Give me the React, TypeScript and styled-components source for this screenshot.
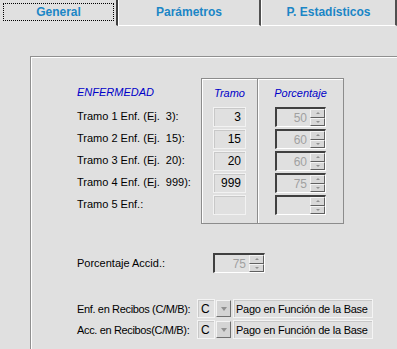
import React from 'react';
import styled, { createGlobalStyle } from 'styled-components';

const GlobalStyle = createGlobalStyle`
  html, body {
    margin: 0;
    padding: 0;
    background: #e0e0e0;
    font-family: "Liberation Sans", Arial, sans-serif;
    font-size: 11px;
    color: #000;
    overflow: hidden;
  }
`;

const Page = styled.div`
  width: 397px;
  height: 349px;
  overflow: hidden;
  background: #e0e0e0;
  white-space: nowrap;
`;

const TabBar = styled.div`
  display: flex;
  height: 26px;
`;

const Tab = styled.div<{ $active?: boolean; $width: number }>`
  width: ${p => p.$width}px;
  box-sizing: border-box;
  display: flex;
  align-items: center;
  justify-content: center;
  font-weight: bold;
  font-size: 12px;
  color: #1b86c6;
  border-left: 1px solid ${p => (p.$active ? 'transparent' : '#ffffff')};
  border-right: 2px solid ${p => (p.$active ? '#404040' : '#505050')};
  border-bottom: 1px solid ${p => (p.$active ? 'transparent' : '#ffffff')};
  padding: 2px 2px 4px;
`;

const FocusRing = styled.div`
  flex: 1;
  align-self: stretch;
  display: flex;
  align-items: center;
  justify-content: center;
  border: 1px dotted #000;
  margin-top: 1px;
`;

const Body = styled.div`
  padding: 30px 0 0 30px;
`;

const Frame = styled.div`
  border-top: 1px solid #909090;
  border-left: 1px solid #909090;
  box-shadow: inset 1px 1px 0 #ffffff;
  padding: 21px 0 40px 46px;
  height: 400px;
`;

const TableRow = styled.div`
  display: flex;
`;

const LabelCol = styled.div`
  width: 124px;
  display: flex;
  flex-direction: column;
`;

const TableBox = styled.div`
  display: flex;
  border: 1px solid #8c8c8c;
  box-shadow: inset 1px 1px 0 #ffffff;
  height: 146px;
  box-sizing: border-box;
`;

const Col = styled.div<{ $width: number; $divider?: boolean }>`
  width: ${p => p.$width}px;
  display: flex;
  flex-direction: column;
  align-items: center;
  border-right: ${p => (p.$divider ? '1px solid #8c8c8c' : 'none')};
  box-shadow: ${p => (p.$divider ? '1px 0 0 #ffffff' : 'none')};
`;

const HeaderCell = styled.div<{ $align?: string }>`
  height: 28px;
  display: flex;
  align-items: center;
  justify-content: ${p => p.$align || 'center'};
  color: #0000c8;
  font-style: italic;
  font-size: 11px;
`;

const Cell = styled.div`
  height: 22px;
  display: flex;
  align-items: flex-start;
`;

const Label = styled.div`
  height: 22px;
  display: flex;
  align-items: center;
  padding-bottom: 2px;
  box-sizing: border-box;
  white-space: pre;
`;

const FlatInput = styled.div<{ $width: number }>`
  width: ${p => p.$width}px;
  height: 20px;
  box-sizing: border-box;
  border: 1px solid #f2f2f2;
  box-shadow: inset 1px 1px 0 #c8c8c8;
  display: flex;
  align-items: center;
  justify-content: flex-end;
  padding-right: 4px;
  font-size: 12px;
  color: #000;
`;

const SpinBox = styled.div<{ $width: number }>`
  width: ${p => p.$width}px;
  height: 20px;
  box-sizing: border-box;
  border-top: 2px solid #404040;
  border-left: 2px solid #404040;
  border-right: 1px solid #ffffff;
  border-bottom: 1px solid #ffffff;
  display: flex;
  align-items: stretch;
`;

const SpinValue = styled.div`
  flex: 1;
  display: flex;
  align-items: center;
  justify-content: flex-end;
  padding-right: 3px;
  color: #a0a0a0;
  font-size: 12px;
`;

const SpinButtons = styled.div`
  width: 15px;
  display: flex;
  flex-direction: column;
`;

const SpinBtn = styled.div`
  flex: 1;
  background: #d8d8d8;
  border-top: 1px solid #f4f4f4;
  border-left: 1px solid #f4f4f4;
  border-right: 1px solid #606060;
  border-bottom: 1px solid #606060;
  display: flex;
  align-items: center;
  justify-content: center;
`;

const Arrow = styled.div<{ $up?: boolean }>`
  width: 0;
  height: 0;
  border-left: 2px solid transparent;
  border-right: 2px solid transparent;
  ${p => (p.$up ? 'border-bottom: 2px solid #909090;' : 'border-top: 2px solid #909090;')}
`;

const AccidRow = styled.div`
  display: flex;
  align-items: center;
  margin-top: 29px;
`;

const AccidLabel = styled.div`
  width: 136px;
`;

const ReciboList = styled.div`
  margin-top: 26px;
  display: flex;
  flex-direction: column;
  gap: 2px;
`;

const ReciboRow = styled.div`
  display: flex;
  align-items: center;
  height: 19px;
`;

const ReciboLabel = styled.div`
  width: 120px;
  letter-spacing: -0.35px;
`;

const CodeBox = styled.div`
  width: 18px;
  height: 19px;
  box-sizing: border-box;
  border: 1px solid #f4f4f4;
  box-shadow: inset 1px 1px 0 #c8c8c8;
  display: flex;
  align-items: center;
  padding-left: 3px;
  font-size: 12px;
`;

const DropBtn = styled.div`
  width: 15px;
  height: 17px;
  margin: 0 2px 0 1px;
  box-sizing: border-box;
  background: #d4d4d4;
  border-top: 1px solid #f4f4f4;
  border-left: 1px solid #f4f4f4;
  border-right: 1px solid #707070;
  border-bottom: 1px solid #707070;
  display: flex;
  align-items: center;
  justify-content: center;
`;

const DropArrow = styled.div`
  width: 0;
  height: 0;
  border-left: 3px solid transparent;
  border-right: 3px solid transparent;
  border-top: 4px solid #909090;
`;

const DescBox = styled.div`
  width: 140px;
  height: 19px;
  box-sizing: border-box;
  border: 1px solid #f4f4f4;
  box-shadow: inset 1px 1px 0 #c8c8c8;
  display: flex;
  align-items: center;
  padding-left: 2px;
  font-size: 11px;
  letter-spacing: -0.25px;
  overflow: hidden;
`;

const Spinner: React.FC<{ value: string; width: number }> = ({ value, width }) => (
  <SpinBox $width={width}>
    <SpinValue>{value}</SpinValue>
    <SpinButtons>
      <SpinBtn><Arrow $up /></SpinBtn>
      <SpinBtn><Arrow /></SpinBtn>
    </SpinButtons>
  </SpinBox>
);

const tramos = [
  { label: 'Tramo 1 Enf. (Ej.  3):', tramo: '3', pct: '50' },
  { label: 'Tramo 2 Enf. (Ej.  15):', tramo: '15', pct: '60' },
  { label: 'Tramo 3 Enf. (Ej.  20):', tramo: '20', pct: '60' },
  { label: 'Tramo 4 Enf. (Ej.  999):', tramo: '999', pct: '75' },
  { label: 'Tramo 5 Enf.:', tramo: '', pct: '' },
];

const recibos = ['Enf. en Recibos (C/M/B):', 'Acc. en Recibos(C/M/B):'];

const App: React.FC = () => {
  return (
    <Page>
      <GlobalStyle />
      <TabBar>
        <Tab $active $width={118}><FocusRing>General</FocusRing></Tab>
        <Tab $width={143}>Parámetros</Tab>
        <Tab $width={136}>P. Estadísticos</Tab>
      </TabBar>
      <Body>
        <Frame>
          <TableRow>
            <LabelCol>
              <HeaderCell $align="flex-start">ENFERMEDAD</HeaderCell>
              {tramos.map(t => (
                <Label key={t.label}>{t.label}</Label>
              ))}
            </LabelCol>
            <TableBox>
              <Col $width={55} $divider>
                <HeaderCell>Tramo</HeaderCell>
                {tramos.map(t => (
                  <Cell key={t.label}><FlatInput $width={33}>{t.tramo}</FlatInput></Cell>
                ))}
              </Col>
              <Col $width={85}>
                <HeaderCell>Porcentaje</HeaderCell>
                {tramos.map(t => (
                  <Cell key={t.label}><Spinner value={t.pct} width={51} /></Cell>
                ))}
              </Col>
            </TableBox>
          </TableRow>
          <AccidRow>
            <AccidLabel>Porcentaje Accid.:</AccidLabel>
            <Spinner value="75" width={52} />
          </AccidRow>
          <ReciboList>
            {recibos.map(r => (
              <ReciboRow key={r}>
                <ReciboLabel>{r}</ReciboLabel>
                <CodeBox>C</CodeBox>
                <DropBtn><DropArrow /></DropBtn>
                <DescBox>Pago en Función de la Base</DescBox>
              </ReciboRow>
            ))}
          </ReciboList>
        </Frame>
      </Body>
    </Page>
  );
};

export default App;
